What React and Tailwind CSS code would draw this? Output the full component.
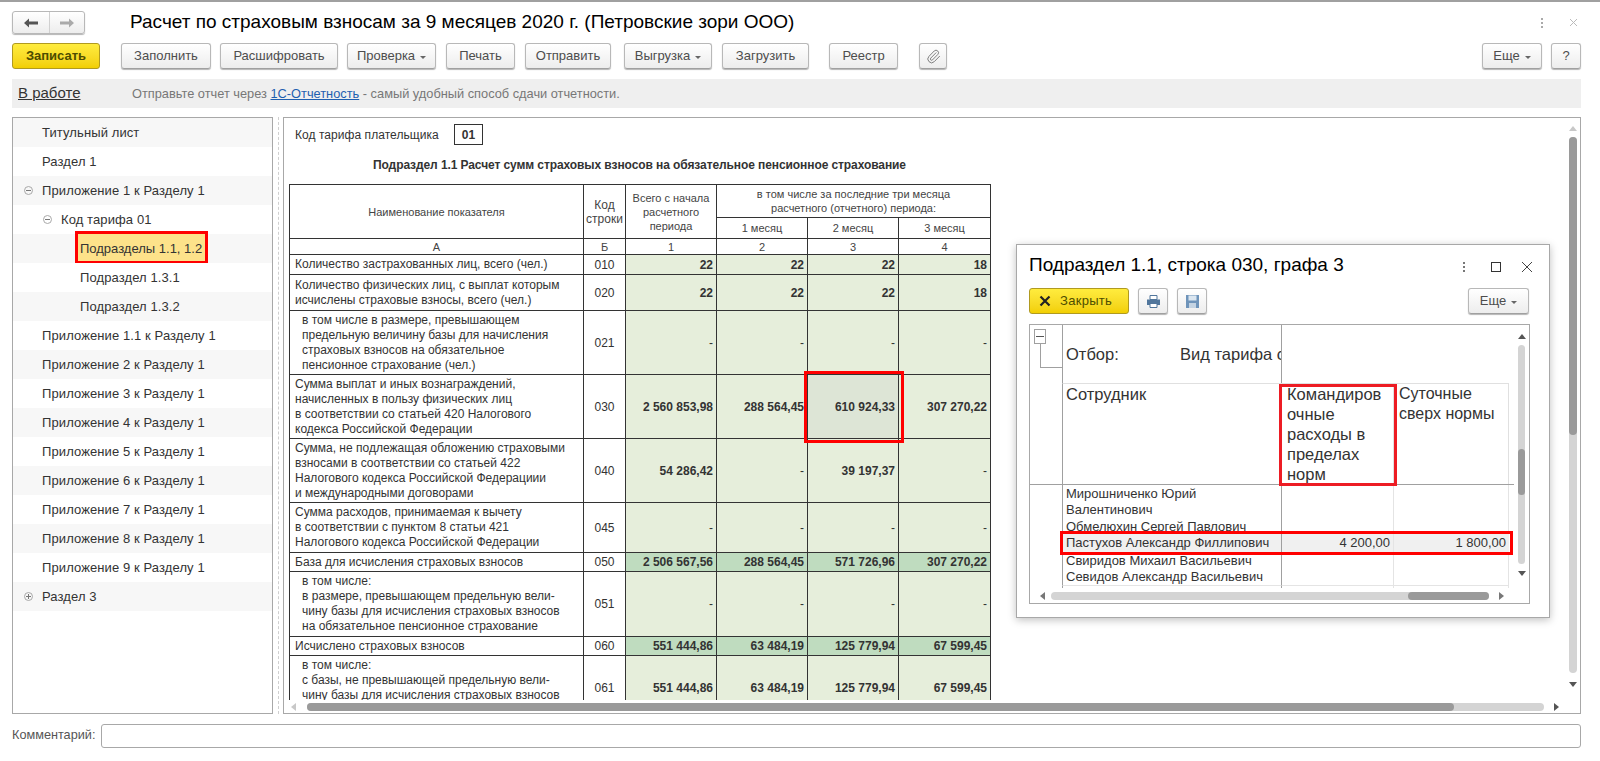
import { Paperclip } from "lucide-react";

const sans = { fontFamily: '"Liberation Sans", Arial, sans-serif' };

// Кнопка панели
function Btn({ w, ml = "", children, arrow }) {
  return (
    <div className={`${w} ${ml} h-[26px] shrink-0 flex items-center justify-center gap-[5px] rounded-[3px] border border-[#b8b8b8] border-b-[#a0a0a0] bg-linear-to-b from-white to-[#ededed] shadow-[0_1px_1px_#b5b5b5] text-[13px] text-[#4d4d4d]`}>
      {children}
      {arrow && <span className="w-0 h-0 mt-[2px] border-x-[3px] border-t-[3px] border-x-transparent border-t-[#666]"></span>}
    </div>
  );
}

function Tri({ dir, color = "#777" }) {
  const points = {
    up: "0,6 4,1 8,6",
    down: "0,2 8,2 4,7",
    left: "6,0 6,8 1,4",
    right: "2,0 2,8 7,4",
  };
  return (
    <svg width="8" height="8" viewBox="0 0 8 8" className="shrink-0">
      <polygon points={points[dir]} fill={color} />
    </svg>
  );
}

const tree = [
  { t: "Титульный лист", l: 0 },
  { t: "Раздел 1", l: 0 },
  { t: "Приложение 1 к Разделу 1", l: 0, icon: "minus" },
  { t: "Код тарифа 01", l: 1, icon: "minus" },
  { t: "Подразделы 1.1, 1.2", l: 2, sel: true },
  { t: "Подраздел 1.3.1", l: 2 },
  { t: "Подраздел 1.3.2", l: 2 },
  { t: "Приложение 1.1 к Разделу 1", l: 0 },
  { t: "Приложение 2 к Разделу 1", l: 0 },
  { t: "Приложение 3 к Разделу 1", l: 0 },
  { t: "Приложение 4 к Разделу 1", l: 0 },
  { t: "Приложение 5 к Разделу 1", l: 0 },
  { t: "Приложение 6 к Разделу 1", l: 0 },
  { t: "Приложение 7 к Разделу 1", l: 0 },
  { t: "Приложение 8 к Разделу 1", l: 0 },
  { t: "Приложение 9 к Разделу 1", l: 0 },
  { t: "Раздел 3", l: 0, icon: "plus" },
];

function TreeIcon({ kind }) {
  return (
    <svg width="9" height="9" viewBox="0 0 9 9" className="shrink-0">
      <circle cx="4.5" cy="4.5" r="4" fill="none" stroke="#a8a8a8" />
      <path d="M2 4.5h5" stroke="#777" />
      {kind === "plus" && <path d="M4.5 2v5" stroke="#777" />}
    </svg>
  );
}

function TreeRow({ row, odd }) {
  const pad = row.l === 0 ? "pl-[29px]" : row.l === 1 ? "pl-[48px]" : "pl-[67px]";
  return (
    <div className={`relative h-[29px] flex items-center ${pad} text-[13px] ${row.sel ? "tracking-normal" : "tracking-[0.1px]"} text-[#333] ${odd ? "bg-[#f7f7f7]" : "bg-white"}`}>
      {row.icon && (
        <span className={`absolute top-[10px] ${row.l === 0 ? "left-[11px]" : "left-[30px]"}`}>
          <TreeIcon kind={row.icon} />
        </span>
      )}
      {row.sel && <span className="absolute left-[62px] top-[-3px] w-[133px] h-[33px] bg-[#fde28a] border-[3px] border-[#ff0000]"></span>}
      <span className="relative">{row.t}</span>
    </div>
  );
}

const rows = [
  { k: "010", h: "h-[20px]", lines: ["Количество застрахованных лиц, всего (чел.)"], v: ["22", "22", "22", "18"] },
  { k: "020", h: "h-[36px]", lines: ["Количество физических лиц, с выплат которым", "исчислены страховые взносы, всего (чел.)"], v: ["22", "22", "22", "18"] },
  { k: "021", h: "h-[64px]", sub: true, lines: ["в том числе в размере, превышающем", "предельную величину базы для начисления", "страховых взносов на обязательное", "пенсионное страхование (чел.)"], v: ["-", "-", "-", "-"] },
  { k: "030", h: "h-[64px]", lines: ["Сумма выплат и иных вознаграждений,", "начисленных в пользу физических лиц", "в соответствии со статьей 420 Налогового", "кодекса Российской Федерации"], v: ["2 560 853,98", "288 564,45", "610 924,33", "307 270,22"], mark: true },
  { k: "040", h: "h-[64px]", lines: ["Сумма, не подлежащая обложению страховыми", "взносами в соответствии со статьей 422", "Налогового кодекса Российской Федерациии", "и международными договорами"], v: ["54 286,42", "-", "39 197,37", "-"] },
  { k: "045", h: "h-[50px]", lines: ["Сумма расходов, принимаемая к вычету", "в соответствии с пунктом 8 статьи 421", "Налогового кодекса Российской Федерации"], v: ["-", "-", "-", "-"] },
  { k: "050", h: "h-[19px]", dark: true, lines: ["База для исчисления страховых взносов"], v: ["2 506 567,56", "288 564,45", "571 726,96", "307 270,22"] },
  { k: "051", h: "h-[65px]", sub: true, lines: ["в том числе:", "в размере, превышающем предельную вели-", "чину базы для исчисления страховых взносов", "на обязательное пенсионное страхование"], v: ["-", "-", "-", "-"] },
  { k: "060", h: "h-[19px]", dark: true, lines: ["Исчислено страховых взносов"], v: ["551 444,86", "63 484,19", "125 779,94", "67 599,45"] },
  { k: "061", h: "h-[65px]", sub: true, lines: ["в том числе:", "с базы, не превышающей предельную вели-", "чину базы для исчисления страховых взносов", "на обязательное пенсионное страхование"], v: ["551 444,86", "63 484,19", "125 779,94", "67 599,45"] },
];

const th = "border border-[#333] font-normal text-[11px] leading-[14px] text-[#444] text-center align-middle p-0";

function MainTable() {
  return (
    <table className="ml-[5px] mt-[12px] w-[701px] table-fixed border-collapse">
      <colgroup>
        <col className="w-[294px]" />
        <col className="w-[42px]" />
        <col className="w-[91px]" />
        <col className="w-[91px]" />
        <col className="w-[91px]" />
        <col className="w-[92px]" />
      </colgroup>
      <thead>
        <tr className="h-[33px]">
          <th rowSpan={2} className={th}>Наименование показателя</th>
          <th rowSpan={2} className={`${th} text-[12px]`}>Код<br />строки</th>
          <th rowSpan={2} className={th}>Всего с начала<br />расчетного<br />периода</th>
          <th colSpan={3} className={th}>в том числе за последние три месяца<br />расчетного (отчетного) периода:</th>
        </tr>
        <tr className="h-[21px]">
          <th className={th}>1 месяц</th>
          <th className={th}>2 месяц</th>
          <th className={th}>3 месяц</th>
        </tr>
        <tr className="h-[16px]">
          {["А", "Б", "1", "2", "3", "4"].map((c) => (
            <th key={c} className={th}>{c}</th>
          ))}
        </tr>
      </thead>
      <tbody>
        {rows.map((r) => (
          <tr key={r.k} className={r.h}>
            <td className={`border border-[#333] py-0 pr-0 text-[12px] leading-[15px] text-[#333] whitespace-nowrap ${r.sub ? "pl-[12px]" : "pl-[5px]"}`}>
              {r.lines.map((l) => (
                <div key={l}>{l}</div>
              ))}
            </td>
            <td className="border border-[#333] p-0 text-center text-[12px] text-[#333]">{r.k}</td>
            {r.v.map((v, i) => (
              <td
                key={i}
                className={`border border-[#333] p-0 pr-[3px] text-right text-[12px] font-bold text-[#333] whitespace-nowrap ${r.dark ? "bg-[#bfdcbf]" : r.mark && i === 2 ? "relative bg-[#dde5d6]" : "bg-[#e6eedb]"}`}
              >
                {v === "-" ? <span className="font-normal">-</span> : v}
                {r.mark && i === 2 && <span className="absolute -left-[4px] -top-[4px] w-[100px] h-[72px] border-[3px] border-[#ff0000]"></span>}
              </td>
            ))}
          </tr>
        ))}
      </tbody>
    </table>
  );
}

function DialogRow({ name, h, line = true }) {
  return (
    <div className={`${h} grid grid-cols-[32px_219px_112px_116px] overflow-hidden`}>
      <div></div>
      <div className={`border-l border-[#a0a0a0] pl-[3px] pt-[1px] text-[13px] leading-[16px] text-[#333] ${line ? "border-b border-b-[#e4e4e4]" : ""}`}>{name}</div>
      <div className={`border-l border-[#a0a0a0] ${line ? "border-b border-b-[#e4e4e4]" : ""}`}></div>
      <div className={`border-l border-r border-[#e4e4e4] ${line ? "border-b" : ""}`}></div>
    </div>
  );
}

function Dialog() {
  return (
    <div className="absolute left-[1016px] top-[242px] w-[534px] h-[374px] bg-white border border-[#a8a8a8] shadow-[0_2px_8px_rgba(0,0,0,0.25)] flex flex-col pl-[12px] pr-[20px]">
      <div className="h-[43px] flex items-center text-[19px] text-black shrink-0">
        <span className="pb-[3px]">Подраздел 1.1, строка 030, графа 3</span>
        <div className="ml-auto flex items-center">
          <span className="flex flex-col gap-[2px]">
            <i className="w-[2px] h-[2px] bg-[#777]"></i>
            <i className="w-[2px] h-[2px] bg-[#777]"></i>
            <i className="w-[2px] h-[2px] bg-[#777]"></i>
          </span>
          <span className="ml-[26px] w-[10px] h-[10px] border border-[#333]"></span>
          <svg width="12" height="12" viewBox="0 0 12 12" className="ml-[20px] mr-[-4px]">
            <path d="M1 1l10 10M11 1L1 11" stroke="#444" strokeWidth="1" />
          </svg>
        </div>
      </div>
      <div className="h-[27px] flex items-start shrink-0">
        <div className="w-[100px] h-[26px] flex items-center gap-[9px] pl-[9px] rounded-[3px] border border-[#b09a20] bg-linear-to-b from-[#ffec3d] to-[#f2cf00] text-[13px] tracking-[0.3px] text-[#4d4d00]">
          <svg width="12" height="12" viewBox="0 0 12 12">
            <path d="M1.5 1.5l9 9M10.5 1.5l-9 9" stroke="#222" strokeWidth="2.2" />
          </svg>
          Закрыть
        </div>
        <Btn w="w-[30px]" ml="ml-[9px]">
          <svg width="15" height="15" viewBox="0 0 15 15">
            <path d="M4 1.5h7v4H4z" fill="#fff" stroke="#51769c" />
            <path d="M1 5.5h13v5.5h-13z" fill="#51769c" />
            <path d="M4 9.5h7v4H4z" fill="#fff" stroke="#51769c" />
          </svg>
        </Btn>
        <Btn w="w-[30px]" ml="ml-[9px]">
          <svg width="15" height="15" viewBox="0 0 15 15">
            <path d="M1 1h13v13H1z" fill="#6f94ba" />
            <path d="M3.5 1.5h8v5h-8z" fill="#dbe6f0" />
            <path d="M4 9h7v5H4z" fill="#c4d3e2" />
          </svg>
        </Btn>
        <Btn w="w-[61px]" ml="ml-auto" arrow>Еще</Btn>
      </div>
      <div className="mt-[9px] w-[501px] h-[280px] border border-[#a8a8a8] flex shrink-0">
        <div className="w-[485px] flex flex-col">
          <div className="h-[58px] grid grid-cols-[32px_219px_112px_116px]">
            <div className="relative">
              <span className="absolute left-[4px] top-[4px] w-[12px] h-[15px] border border-[#a0a0a0] flex items-center justify-center">
                <i className="w-[8px] h-px bg-[#555]"></i>
              </span>
              <span className="absolute left-[10px] top-[19px] w-[22px] h-[24px] border-l border-b border-[#a0a0a0]"></span>
            </div>
            <div className="border-l border-[#a0a0a0] pl-[3px] pt-[17px] text-[16.5px] text-[#333] whitespace-nowrap overflow-hidden flex">
              <span className="w-[114px] shrink-0">Отбор:</span>
              <span>Вид тарифа страховых</span>
            </div>
            <div className="border-l border-[#a0a0a0]"></div>
            <div></div>
          </div>
          <div className="h-[102px] grid grid-cols-[32px_219px_112px_116px] border-b border-[#a0a0a0]">
            <div></div>
            <div className="border-l border-t border-[#e0e0e0] border-l-[#a0a0a0] pl-[3px] text-[16.5px] leading-[20px] text-[#333]">Сотрудник</div>
            <div className="relative border-l border-t border-[#e0e0e0] pl-[5px] text-[16.5px] leading-[20px] text-[#333] whitespace-nowrap">
              Командиров<br />очные<br />расходы в<br />пределах<br />норм
              <span className="absolute left-[-3px] top-0 w-[118px] h-[102px] border-[3px] border-[#ed1c24]"></span>
            </div>
            <div className="border-l border-r border-t border-[#e0e0e0] pl-[5px] text-[16px] leading-[20px] text-[#333] whitespace-nowrap">
              Суточные<br />сверх нормы
            </div>
          </div>
          <DialogRow h="h-[34px]" name={<>Мирошниченко Юрий<br />Валентинович</>} />
          <DialogRow h="h-[16px]" name="Обмелюхин Сергей Павлович" />
          <div className="relative h-[18px] grid grid-cols-[32px_219px_112px_116px] text-[13px] leading-[17px] text-[#333]">
            <div></div>
            <div className="border-l border-[#a0a0a0] bg-[#f0f0f0] pl-[3px]">Пастухов Александр Филлипович</div>
            <div className="border-l border-[#a0a0a0] bg-[#f0f0f0] text-right pr-[3px]">4 200,00</div>
            <div className="border-l border-[#e4e4e4] bg-[#f0f0f0] text-right pr-[3px]">1 800,00</div>
            <span className="absolute left-[30px] top-[-3px] w-[453px] h-[24px] border-[3px] border-[#ff0000]"></span>
          </div>
          <DialogRow h="h-[16px]" name="Свиридов Михаил Васильевич" />
          <DialogRow h="h-[18px]" name="Севидов Александр Васильевич" />
          <DialogRow h="h-[2px]" line={false} />
          <div className="h-[15px] flex items-center shrink-0 pl-[9px]">
            <Tri dir="left" />
            <div className="ml-[4px] w-[438px] h-[8px] rounded-full bg-[#d4d4d4] flex justify-end">
              <span className="w-[81px] h-[8px] rounded-full bg-[#9a9a9a]"></span>
            </div>
            <span className="ml-[8px]"><Tri dir="right" /></span>
          </div>
        </div>
        <div className="w-[15px] flex flex-col items-center pt-[8px]">
          <Tri dir="up" color="#555" />
          <div className="mt-[4px] w-[7px] h-[219px] rounded-full bg-[#d4d4d4] pt-[104px]">
            <div className="w-[7px] h-[46px] rounded-full bg-[#9a9a9a]"></div>
          </div>
          <span className="mt-[5px]"><Tri dir="down" color="#555" /></span>
        </div>
      </div>
    </div>
  );
}

export default function App() {
  return (
    <div className="relative w-[1600px] h-[761px] overflow-hidden bg-white border-t-2 border-[#a0a0a0] flex flex-col" style={sans}>
      {/* Заголовок */}
      <div className="h-[41px] shrink-0 flex items-center pl-[12px] pr-[22px]">
        <div className="w-[73px] h-[23px] flex rounded-[3px] border border-[#b8b8b8] bg-linear-to-b from-white to-[#ededed] shadow-[0_1px_1px_#b5b5b5]">
          <div className="w-[37px] flex items-center justify-center border-r border-[#d0d0d0]">
            <svg width="14" height="10" viewBox="0 0 14 10"><path d="M0 5l5-4.5v3h9v3H5v3z" fill="#555" /></svg>
          </div>
          <div className="flex-1 flex items-center justify-center">
            <svg width="14" height="10" viewBox="0 0 14 10"><path d="M14 5L9 .5v3H0v3h9v3z" fill="#aaa" /></svg>
          </div>
        </div>
        <span className="ml-[45px] text-[19px] text-black">Расчет по страховым взносам за 9 месяцев 2020 г. (Петровские зори ООО)</span>
        <span className="ml-auto flex flex-col gap-[2px]">
          <i className="w-[2px] h-[2px] bg-[#aaa]"></i>
          <i className="w-[2px] h-[2px] bg-[#aaa]"></i>
          <i className="w-[2px] h-[2px] bg-[#aaa]"></i>
        </span>
        <svg width="9" height="9" viewBox="0 0 9 9" className="ml-[26px]">
          <path d="M1 1l7 7M8 1L1 8" stroke="#bbb" />
        </svg>
      </div>

      {/* Кнопки */}
      <div className="h-[26px] shrink-0 flex pl-[12px] pr-[19px]">
        <div className="w-[88px] h-[26px] flex items-center justify-center rounded-[3px] border border-[#b09a20] bg-linear-to-b from-[#ffec3d] to-[#f2cf00] text-[13px] font-bold text-[#4d4d00]">Записать</div>
        <Btn w="w-[90px]" ml="ml-[21px]">Заполнить</Btn>
        <Btn w="w-[118px]" ml="ml-[9px]">Расшифровать</Btn>
        <Btn w="w-[89px]" ml="ml-[9px]" arrow>Проверка</Btn>
        <Btn w="w-[69px]" ml="ml-[10px]">Печать</Btn>
        <Btn w="w-[86px]" ml="ml-[10px]">Отправить</Btn>
        <Btn w="w-[88px]" ml="ml-[13px]" arrow>Выгрузка</Btn>
        <Btn w="w-[87px]" ml="ml-[10px]">Загрузить</Btn>
        <Btn w="w-[69px]" ml="ml-[20px]">Реестр</Btn>
        <Btn w="w-[28px]" ml="ml-[21px]">
          <Paperclip size={15} strokeWidth={1.5} className="text-[#777]" />
        </Btn>
        <Btn w="w-[60px]" ml="ml-auto" arrow>Еще</Btn>
        <Btn w="w-[30px]" ml="ml-[9px]">?</Btn>
      </div>

      {/* Статус */}
      <div className="mt-[10px] ml-[12px] w-[1569px] h-[29px] shrink-0 flex items-center bg-[#efefef]">
        <span className="ml-[6px] w-[114px] text-[15px] text-[#333] underline">В работе</span>
        <span className="text-[12.8px] text-[#777]">
          Отправьте отчет через <span className="text-[#1f5fb0] underline">1С-Отчетность</span> - самый удобный способ сдачи отчетности.
        </span>
      </div>

      {/* Основная часть */}
      <div className="mt-[9px] ml-[12px] w-[1569px] h-[597px] shrink-0 flex">
        <div className="w-[261px] border border-[#a8a8a8] bg-white overflow-hidden">
          {tree.map((row, i) => (
            <TreeRow key={row.t} row={row} odd={i % 2 === 0} />
          ))}
        </div>
        <div className="w-[10px] flex justify-center">
          <div className="w-px h-full border-l border-dashed border-[#cfcfcf]"></div>
        </div>
        <div className="w-[1298px] border border-[#a8a8a8] flex flex-col">
          <div className="h-[582px] flex shrink-0">
            <div className="w-[1283px] overflow-hidden">
              <div className="mt-[6px] h-[21px] flex items-center pl-[11px]">
                <span className="w-[159px] text-[12px] tracking-[0.05px] text-[#333] whitespace-nowrap">Код тарифа плательщика</span>
                <span className="w-[29px] h-[21px] shrink-0 border border-[#333] flex items-center justify-center text-[12px] font-bold text-[#333]">01</span>
              </div>
              <div className="mt-[13px] h-[14px] pl-[89px] text-[12px] font-bold leading-[14px] tracking-[-0.09px] text-[#333] whitespace-nowrap">
                Подраздел 1.1 Расчет сумм страховых взносов на обязательное пенсионное страхование
              </div>
              <MainTable />
            </div>
            <div className="w-[15px] flex flex-col items-center pt-[7px]">
              <Tri dir="up" color="#c8c8c8" />
              <div className="mt-[4px] w-[8px] h-[536px] rounded-full bg-[#d4d4d4]">
                <div className="w-[8px] h-[298px] rounded-full bg-[#9a9a9a]"></div>
              </div>
              <span className="mt-[7px]"><Tri dir="down" color="#555" /></span>
            </div>
          </div>
          <div className="h-[13px] flex items-center pl-[6px]">
            <Tri dir="left" color="#c8c8c8" />
            <div className="ml-[9px] w-[1237px] h-[8px] rounded-full bg-[#d4d4d4]">
              <div className="w-[1147px] h-[8px] rounded-full bg-[#9a9a9a]"></div>
            </div>
            <span className="ml-[8px]"><Tri dir="right" color="#555" /></span>
          </div>
        </div>
      </div>

      {/* Комментарий */}
      <div className="mt-[10px] ml-[12px] w-[1569px] h-[24px] shrink-0 flex items-center">
        <span className="w-[89px] text-[12.7px] text-[#555] whitespace-nowrap">Комментарий:</span>
        <div className="flex-1 h-[24px] rounded-[3px] border border-[#a8a8a8] bg-white"></div>
      </div>

      <Dialog />
    </div>
  );
}
